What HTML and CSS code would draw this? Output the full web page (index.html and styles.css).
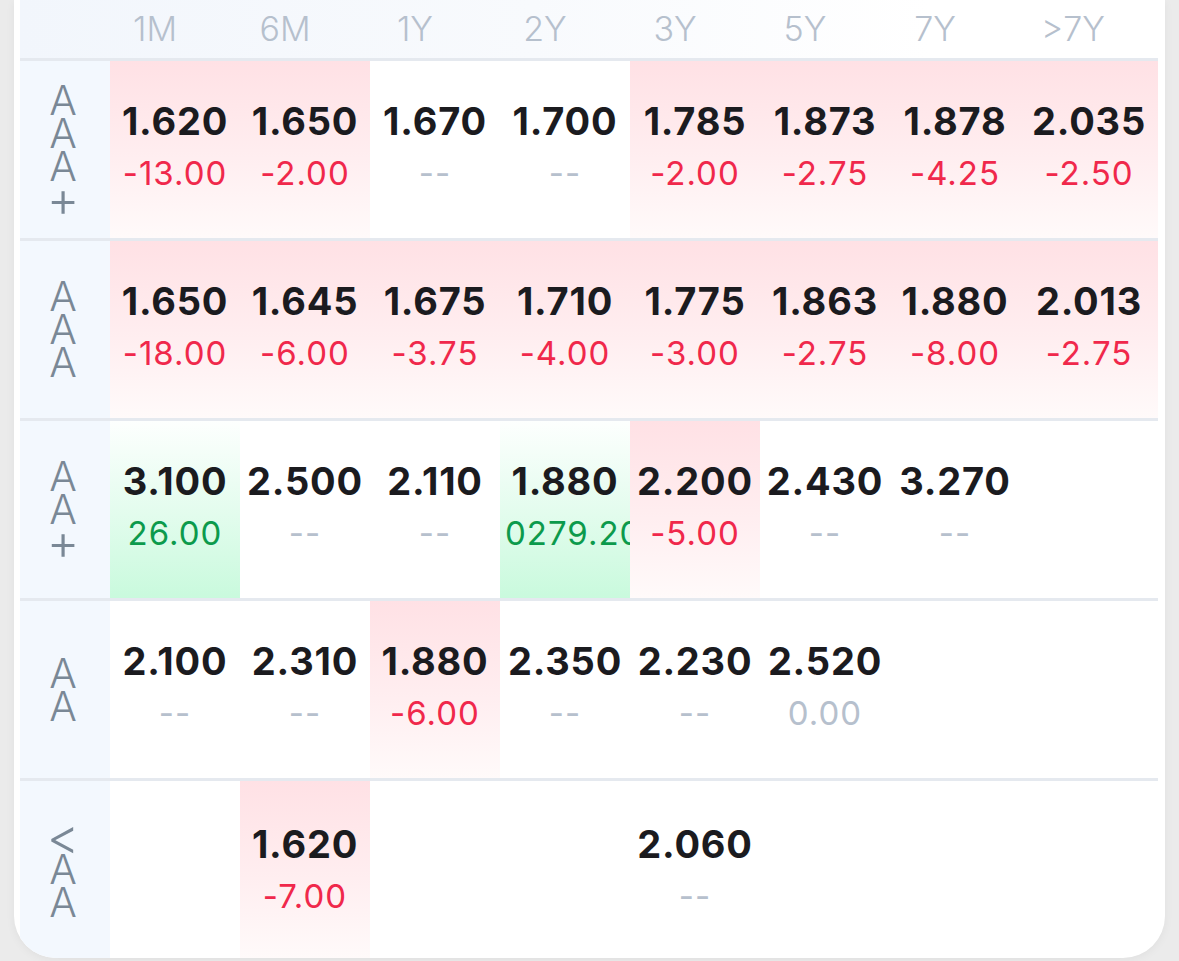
FILE: index.html
```html
<!DOCTYPE html>
<html>
<head>
<meta charset="utf-8">
<link rel="stylesheet" href="styles.css">
</head>
<body>
<div class="page">
  <div class="card">
    <div class="table">
      <div class="head">
        <div class="hcorner"></div>
        <div class="hcell">1M</div>
        <div class="hcell">6M</div>
        <div class="hcell">1Y</div>
        <div class="hcell">2Y</div>
        <div class="hcell">3Y</div>
        <div class="hcell">5Y</div>
        <div class="hcell">7Y</div>
        <div class="hcell">&gt;7Y</div>
      </div>

      <div class="row">
        <div class="label"><span>A</span><span>A</span><span>A</span><span class="sym">+</span></div>
        <div class="cell down"><div class="val">1.620</div><div class="chg neg">-13.00</div></div>
        <div class="cell down"><div class="val">1.650</div><div class="chg neg">-2.00</div></div>
        <div class="cell"><div class="val">1.670</div><div class="chg nil">--</div></div>
        <div class="cell"><div class="val">1.700</div><div class="chg nil">--</div></div>
        <div class="cell down"><div class="val">1.785</div><div class="chg neg">-2.00</div></div>
        <div class="cell down"><div class="val">1.873</div><div class="chg neg">-2.75</div></div>
        <div class="cell down"><div class="val">1.878</div><div class="chg neg">-4.25</div></div>
        <div class="cell down"><div class="val">2.035</div><div class="chg neg">-2.50</div></div>
      </div>

      <div class="row">
        <div class="label"><span>A</span><span>A</span><span>A</span></div>
        <div class="cell down"><div class="val">1.650</div><div class="chg neg">-18.00</div></div>
        <div class="cell down"><div class="val">1.645</div><div class="chg neg">-6.00</div></div>
        <div class="cell down"><div class="val">1.675</div><div class="chg neg">-3.75</div></div>
        <div class="cell down"><div class="val">1.710</div><div class="chg neg">-4.00</div></div>
        <div class="cell down"><div class="val">1.775</div><div class="chg neg">-3.00</div></div>
        <div class="cell down"><div class="val">1.863</div><div class="chg neg">-2.75</div></div>
        <div class="cell down"><div class="val">1.880</div><div class="chg neg">-8.00</div></div>
        <div class="cell down"><div class="val">2.013</div><div class="chg neg">-2.75</div></div>
      </div>

      <div class="row">
        <div class="label"><span>A</span><span>A</span><span class="sym">+</span></div>
        <div class="cell up"><div class="val">3.100</div><div class="chg pos">26.00</div></div>
        <div class="cell"><div class="val">2.500</div><div class="chg nil">--</div></div>
        <div class="cell"><div class="val">2.110</div><div class="chg nil">--</div></div>
        <div class="cell up"><div class="val">1.880</div><div class="chg pos">0279.20</div></div>
        <div class="cell down"><div class="val">2.200</div><div class="chg neg">-5.00</div></div>
        <div class="cell"><div class="val">2.430</div><div class="chg nil">--</div></div>
        <div class="cell"><div class="val">3.270</div><div class="chg nil">--</div></div>
        <div class="cell"></div>
      </div>

      <div class="row">
        <div class="label"><span>A</span><span>A</span></div>
        <div class="cell"><div class="val">2.100</div><div class="chg nil">--</div></div>
        <div class="cell"><div class="val">2.310</div><div class="chg nil">--</div></div>
        <div class="cell down"><div class="val">1.880</div><div class="chg neg">-6.00</div></div>
        <div class="cell"><div class="val">2.350</div><div class="chg nil">--</div></div>
        <div class="cell"><div class="val">2.230</div><div class="chg nil">--</div></div>
        <div class="cell"><div class="val">2.520</div><div class="chg nil">0.00</div></div>
        <div class="cell"></div>
        <div class="cell"></div>
      </div>

      <div class="row last">
        <div class="label"><span class="sym">&lt;</span><span>A</span><span>A</span></div>
        <div class="cell"></div>
        <div class="cell down"><div class="val">1.620</div><div class="chg neg">-7.00</div></div>
        <div class="cell"></div>
        <div class="cell"></div>
        <div class="cell"><div class="val">2.060</div><div class="chg nil">--</div></div>
        <div class="cell"></div>
        <div class="cell"></div>
        <div class="cell"></div>
      </div>
    </div>
  </div>
</div>
</body>
</html>
```

FILE: styles.css
```css
html, body {
  margin: 0;
  padding: 0;
  background: #ebebeb;
}

body {
  font-family: Inter, "Noto Sans", sans-serif;
  width: 1179px;
  height: 961px;
  overflow: hidden;
}

.page {
  padding: 0 14px 0 14px;
}

.card {
  width: 1151px;
  height: 958px;
  box-sizing: border-box;
  padding-left: 6px;
  background: #ffffff;
  border-radius: 0 0 42px 42px;
  overflow: hidden;
  box-shadow: 0 2px 10px rgba(0, 0, 0, 0.05);
}

.table {
  width: 1138px;
  height: 100%;
  display: flex;
  flex-direction: column;
}

.head {
  height: 58px;
  flex: none;
  display: grid;
  grid-template-columns: 70px repeat(7, 130px) 146px;
  align-items: center;
  background: linear-gradient(to right, #f2f6fc 0%, #f8fafd 45%, #ffffff 80%);
}

.hcell {
  text-align: center;
  font-size: 34px;
  font-weight: 300;
  color: #b6c0cd;
  line-height: 58px;
}

.row {
  height: 177px;
  flex: none;
  display: grid;
  grid-template-columns: 90px repeat(7, 130px) 1fr;
  border-top: 3px solid #e5e9ef;
}

.row.last {
  flex: 1;
  height: auto;
}

.label {
  background: #f3f8fe;
  display: flex;
  flex-direction: column;
  align-items: center;
  justify-content: center;
  font-size: 41px;
  font-weight: 300;
  color: #7a8896;
  padding-right: 4px;
}

.label span {
  display: block;
  line-height: 33px;
  height: 33px;
}

.label .sym {
  font-size: 50px;
}

.cell {
  display: flex;
  flex-direction: column;
  justify-content: center;
  padding: 0 5px 5px 5px;
  overflow: hidden;
  text-align: center;
  white-space: nowrap;
  min-width: 0;
}

.row.last .cell {
  padding-bottom: 0;
}

.cell.down {
  background: linear-gradient(to bottom, #ffe1e5 0%, #ffeef0 55%, #fffafa 100%);
}

.cell.up {
  background: linear-gradient(to bottom, #fdfffe 0%, #e4fcee 50%, #c9fadd 100%);
}

.val {
  font-size: 38px;
  font-weight: 700;
  letter-spacing: 0.8px;
  color: #1b1b1f;
  line-height: 52px;
  height: 52px;
}

.chg {
  font-size: 33px;
  font-weight: 400;
  letter-spacing: 1px;
  line-height: 52px;
  height: 52px;
}

.chg.neg {
  color: #f0284b;
}

.chg.pos {
  color: #0c9a4c;
}

.chg.nil {
  color: #b6c0cd;
}
```
